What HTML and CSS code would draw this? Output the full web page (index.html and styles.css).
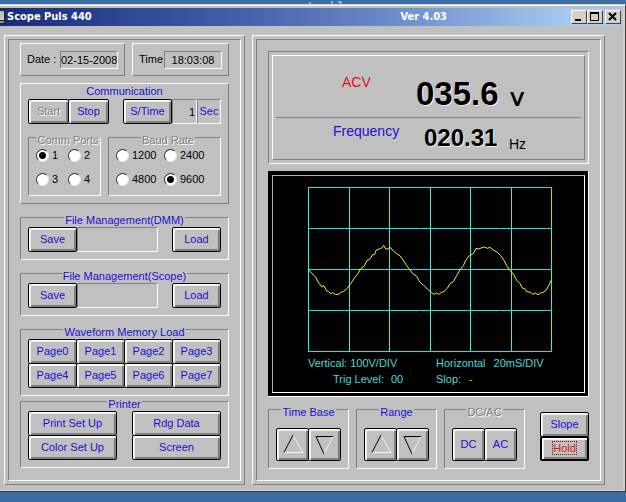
FILE: index.html
```html
<!DOCTYPE html>
<html lang="en">
<head>
<meta charset="utf-8">
<title>Scope Puls 440</title>
<link rel="stylesheet" href="styles.css">
</head>
<body>
<svg class="desktop-marks" viewBox="0 0 40 4" aria-hidden="true"><path d="M4 2v2M26 1v3M32 2h3v2"/></svg>
<div class="window">
  <header class="titlebar">
    <svg class="app-icon" viewBox="0 0 5 14" aria-hidden="true"><path d="M0 0h5v14H0z" fill="#222"/><path d="M0 1h4v9H0z" fill="#c0c0c0"/><path d="M0 12h4M1 9h2" stroke="#fff"/></svg>
    <h1>Scope Puls 440</h1>
    <span class="version">Ver 4.03</span>
    <div class="caption-buttons">
      <button class="cap" type="button" aria-label="Minimize"><svg viewBox="0 0 14 12"><path d="M3 9h6" stroke="#000" stroke-width="2"/></svg></button>
      <button class="cap" type="button" aria-label="Maximize"><svg viewBox="0 0 14 12"><path d="M2 2h9" stroke="#000" stroke-width="2"/><path d="M2.500 2v7.500h8V2" fill="none" stroke="#000"/></svg></button>
      <button class="cap close" type="button" aria-label="Close"><svg viewBox="0 0 14 12"><path d="M3 2l7 7M10 2l-7 7" stroke="#000" stroke-width="2"/></svg></button>
    </div>
  </header>
  <main class="panels">
    <section class="panel"><div class="panel-in">
      <div class="clock">
        <div class="raised clock-box"><label for="date">Date :</label><output id="date" class="field">02-15-2008</output></div>
        <div class="raised clock-box"><label for="time">Time</label><output id="time" class="field">18:03:08</output></div>
      </div>
      <section class="raised comm">
        <h2>Communication</h2>
        <div class="row">
          <button class="btn w-sm" type="button" disabled>Start</button><button class="btn w-sm" type="button">Stop</button>
          <button class="btn w-md push" type="button">S/Time</button><input class="field secs" type="text" value="1" aria-label="Sample time"><span class="field unit">Sec</span>
        </div>
        <div class="options">
          <fieldset class="group radios ports">
            <legend class="dim">Comm Ports</legend>
            <label><input type="radio" name="port" checked>1</label><label><input type="radio" name="port">2</label>
            <label><input type="radio" name="port">3</label><label><input type="radio" name="port">4</label>
          </fieldset>
          <fieldset class="group radios baud">
            <legend class="dim">Baud Rate</legend>
            <label><input type="radio" name="baud">1200</label><label><input type="radio" name="baud">2400</label>
            <label><input type="radio" name="baud">4800</label><label><input type="radio" name="baud" checked>9600</label>
          </fieldset>
        </div>
      </section>
      <fieldset class="group">
        <legend>File Management(DMM)</legend>
        <div class="row"><button class="btn w-md" type="button">Save</button><input class="field file" type="text" aria-label="DMM file"><button class="btn w-md push" type="button">Load</button></div>
      </fieldset>
      <fieldset class="group">
        <legend>File Management(Scope)</legend>
        <div class="row"><button class="btn w-md" type="button">Save</button><input class="field file" type="text" aria-label="Scope file"><button class="btn w-md push" type="button">Load</button></div>
      </fieldset>
      <fieldset class="group">
        <legend>Waveform Memory Load</legend>
        <div class="pages">
          <button class="btn" type="button">Page0</button><button class="btn" type="button">Page1</button><button class="btn" type="button">Page2</button><button class="btn" type="button">Page3</button>
          <button class="btn" type="button">Page4</button><button class="btn" type="button">Page5</button><button class="btn" type="button">Page6</button><button class="btn" type="button">Page7</button>
        </div>
      </fieldset>
      <fieldset class="group printer">
        <legend>Printer</legend>
        <div class="prints">
          <button class="btn" type="button">Print Set Up</button><button class="btn" type="button">Rdg Data</button>
          <button class="btn" type="button">Color Set Up</button><button class="btn" type="button">Screen</button>
        </div>
      </fieldset>
    </div></section>

    <section class="panel"><div class="panel-in">
      <div class="meter"><div class="meter-in">
        <div class="reading volts"><span class="name">ACV</span><output class="value">035.6</output><span class="unit-text">V</span></div>
        <div class="reading freq"><span class="name">Frequency</span><output class="value">020.31</output><span class="unit-text">Hz</span></div>
      </div></div>
      <div class="scope"><div class="scope-in">
        <svg class="trace" viewBox="0 0 244 165" role="img" aria-label="Waveform">
          <path class="vert" d="M.5 0v165M41.500 0v165M81.500 0v165M122.500 0v165M162.500 0v165M203.500 0v165M243.500 0v165"/>
          <path class="horz" d="M0 .5h244M0 41.500h244M0 82.500h244M0 123.500h244M0 164.500h244"/>
          <g transform="translate(-48 -22) scale(.33333)"><polyline class="wave" points="146,314 160,330 166,335 176,354 186,366 192,362 200,378 206,380 212,386 218,383 226,388 234,389 242,382 250,380 262,370 272,356 284,338 294,326 302,311 312,304 320,288 330,282 338,269 344,268 348,256 358,252 364,250 371,241 378,253 386,250 392,248 400,258 410,266 420,272 430,286 440,302 450,314 458,326 470,334 480,352 490,360 502,372 514,382 522,388 530,384 536,389 544,382 552,380 562,370 570,356 580,350 590,332 600,314 610,302 616,288 628,272 640,266 648,250 656,252 666,248 674,246 682,250 690,247 700,255 712,262 722,272 732,286 740,302 750,316 762,330 770,346 780,356 788,370 794,370 800,380 812,382 818,388 826,384 834,389 842,384 850,382 858,376 866,362 873,346"/></g>
        </svg>
        <dl class="settings">
          <div><dt>Vertical:</dt><dd>100V/DIV</dd></div>
          <div class="wide"><dt>Horizontal</dt><dd>20mS/DIV</dd></div>
          <div class="trig"><dt>Trig Level:</dt><dd>00</dd></div>
          <div class="slop"><dt>Slop:</dt><dd>-</dd></div>
        </dl>
      </div></div>
      <div class="controls">
        <fieldset class="group keys">
          <legend>Time Base</legend>
          <div class="row">
            <button class="btn key" type="button" aria-label="Time base up"><svg viewBox="1 1 31 31"><path class="lit" d="M17 7l10 17.500H8"/><path class="ink" d="M8 24.500L17 7"/></svg></button><button class="btn key" type="button" aria-label="Time base down"><svg viewBox="1 1 31 31"><path class="lit" d="M25 8.500L16 26"/><path class="ink" d="M25 8.500H8L16 26"/></svg></button>
          </div>
        </fieldset>
        <fieldset class="group keys">
          <legend>Range</legend>
          <div class="row">
            <button class="btn key" type="button" aria-label="Range up"><svg viewBox="1 1 31 31"><path class="lit" d="M17 7l10 17.500H8"/><path class="ink" d="M8 24.500L17 7"/></svg></button><button class="btn key" type="button" aria-label="Range down"><svg viewBox="1 1 31 31"><path class="lit" d="M25 8.500L16 26"/><path class="ink" d="M25 8.500H8L16 26"/></svg></button>
          </div>
        </fieldset>
        <fieldset class="group keys">
          <legend class="dim">DC/AC</legend>
          <div class="row"><button class="btn key" type="button">DC</button><button class="btn key" type="button">AC</button></div>
        </fieldset>
        <div class="stack">
          <button class="btn" type="button">Slope</button>
          <button class="btn hold" type="button"><span>Hold</span></button>
        </div>
      </div>
    </div></section>
  </main>
</div>
</body>
</html>
```
FILE: styles.css
```css
:root {
  --face: #c0c0c0;
  --dark: #808080;
  --ink: #1a10d0;
}
* { box-sizing: border-box; }
body {
  position: relative;
  margin: 0;
  padding: 4px 0 11px;
  background: #3a6ea5;
  color: #000;
  font: 11px/13px "Liberation Sans", Arial, sans-serif;
}
h1, h2, dl, dd { margin: 0; font: inherit; }
.desktop-marks { position: absolute; top: 0; left: 306px; width: 40px; height: 4px; fill: none; stroke: #e8eef8; }

.window {
  padding: 3px 0 6px;
  border: solid;
  border-width: 1px 1px 1px 0;
  border-color: #d4d0c8 #404040 #404040;
  background: var(--face);
  box-shadow: inset 0 1px #fff, inset -2px -1px #d4d0c8;
}
.titlebar {
  display: flex;
  align-items: center;
  height: 18px;
  margin-right: 3px;
  background: linear-gradient(90deg, #172b7c, #405aa4 35%, #6685c6 60%, #a6caf0 92%);
  color: #fff;
  font: bold 11px/18px "DejaVu Sans Condensed", "DejaVu Sans", sans-serif;
}
.app-icon { width: 5px; height: 14px; margin-right: 2px; }
.version { margin-left: auto; }
.caption-buttons { display: flex; margin: 0 1px 0 124px; }
.cap {
  width: 16px;
  height: 14px;
  padding: 0;
  border: 1px solid;
  border-color: #fff #404040 #404040 #fff;
  background: #d4d0c8;
}
.cap svg { display: block; width: 14px; height: 12px; }
.close { margin-left: 2px; }

.panels {
  display: grid;
  grid-template-columns: 241fr 353fr;
  gap: 7px;
  padding: 9px 20px 0 4px;
}
.panel, .panel-in, .meter, .meter-in, .raised, .field, .group { border: 1px solid; }
.panel, .meter-in, .raised { border-color: #fff var(--dark) var(--dark) #fff; }
.panel-in, .meter, .field, .group { border-color: var(--dark) #fff #fff var(--dark); }
.panel { padding: 3px; }
.panel-in { height: 100%; padding: 3px 11px 11px; }

.row { display: flex; }
.push { margin-left: auto; }
.field { min-width: 0; height: 18px; background: var(--face); font: inherit; line-height: 16px; text-align: center; white-space: nowrap; }
.clock { display: grid; grid-template-columns: 105fr 97fr; gap: 7px; }
.clock-box { display: flex; justify-content: space-between; height: 33px; padding: 7px 6px 0; line-height: 17px; }
.clock-box output { width: 58px; }

.comm { margin-top: 7px; padding: 0 7px 7px; }
.comm h2 { height: 15px; color: var(--ink); line-height: 15px; text-align: center; }
.row > .secs, .row > .unit, .row > .file { height: 25px; }
.secs { width: 25px; padding: 0 1px; text-align: right; }
.unit { width: 24px; color: var(--ink); line-height: 23px; }

.group { min-width: 0; margin: 4px 0 0; padding: 0 7px 7px; }
.group legend { height: 19px; margin: 0 auto; padding: 6px 1px 0; color: var(--ink); }
.group legend.dim { color: var(--dark); text-shadow: 1px 1px #fff; }
.options { display: grid; grid-template-columns: 73fr 113fr; gap: 7px; }
.radios { display: grid; grid-template-columns: 32px 1fr; row-gap: 8px; padding: 0 0 8px 7px; }
.baud { grid-template-columns: 48px 1fr; }
.radios label { display: flex; align-items: center; gap: 3px; height: 16px; }
.radios input {
  flex: none;
  appearance: none;
  width: 13px;
  height: 13px;
  margin: 0;
  border: 1px solid;
  border-color: #303030 #e8e8e8 #e8e8e8 #303030;
  border-radius: 50%;
  background: #fff;
}
.radios input:checked { background: radial-gradient(circle, #000 3px, #fff 4px); }
.file { width: 81px; }
.printer { margin-top: -4px; }

.btn {
  min-width: 0;
  height: 25px;
  padding: 0;
  border: 1px solid #000;
  border-radius: 2px;
  background: var(--face);
  box-shadow: inset 1px 1px #fff, inset 2px 2px #eee, inset -2px -2px var(--dark);
  color: var(--ink);
  font: inherit;
}
.btn:disabled { color: var(--dark); text-shadow: 1px 1px #fff; }
.btn + .btn { margin-left: -1px; }
.w-sm { width: 41px; }
.w-md { width: 49px; }
.btn.push { margin-left: auto; }
.pages, .prints { display: grid; grid-auto-rows: 24px; padding: 0 1px 1px 0; }
.pages { grid-template-columns: repeat(4, 1fr); }
.prints { grid-template-columns: 1fr 1fr; column-gap: 16px; }
.pages .btn, .prints .btn { margin: 0 -1px 0 0; }

.meter { height: 113px; margin-top: 8px; padding: 3px; }
.meter-in { display: grid; grid-template-rows: 62px 1fr; height: 100%; padding: 0 3px; }
.reading { display: grid; align-items: start; }
.volts { grid-template-columns: 74px 94px 1fr; padding-left: 66px; border-bottom: 1px solid var(--dark); }
.freq { grid-template-columns: 91px 85px 1fr; padding-left: 57px; }
.name { font-size: 14px; line-height: 16px; }
.value { font-weight: bold; text-shadow: 1px 1px #f0f0f0; }
.volts .name { padding-top: 18px; color: #e01010; -webkit-text-stroke: 1px transparent; }
.volts .value { padding-top: 20px; font-size: 33px; line-height: 36px; }
.volts .unit-text { padding-top: 32px; font-size: 20px; line-height: 22px; text-shadow: 1px 0 #000; }
.freq .name { padding-top: 5px; color: var(--ink); }
.freq .value { padding-top: 6px; font-size: 24px; line-height: 28px; }
.freq .unit-text { padding-top: 18px; font-size: 14px; line-height: 16px; }

.scope {
  margin-top: 7px;
  padding: 4px 3px 3px 4px;
  border: solid #fff;
  border-width: 0 1px 1px 0;
  background: #000;
}
.scope-in { padding: 11px 32px 5px 35px; border: 1px solid; border-color: #b0b0b0 #fff #fff #b0b0b0; }
.trace { display: block; width: 100%; fill: none; }
.vert { stroke: #45e8c8; }
.horz { stroke: #20e0e8; }
.wave { stroke: #f0f040; stroke-width: 3; }
.settings { display: grid; grid-template-columns: 128px 1fr; margin-top: 3px; color: #48dcd8; line-height: 16px; white-space: nowrap; }
.settings div { display: flex; gap: 3px; }
.settings .wide { gap: 8px; }
.settings .trig { gap: 7px; padding-left: 25px; }
.settings .slop { gap: 8px; }

.controls { display: flex; gap: 7px; margin-top: 3px; }
.keys { flex: 1; margin: 0; }
.keys .row { padding-top: 9px; }
.key { flex: 1; height: 33px; }
.key svg { display: block; width: 100%; height: 31px; fill: none; }
.lit { stroke: #f4f4f4; }
.ink { stroke: #000; }
.stack { display: flex; flex-direction: column; width: 49px; margin: 12px 0 0 8px; }
.stack .btn + .btn { margin: -1px 0 0; }
.hold { border-width: 2px; color: #d81818; }
.hold span { outline: 1px dotted #801010; }
```
